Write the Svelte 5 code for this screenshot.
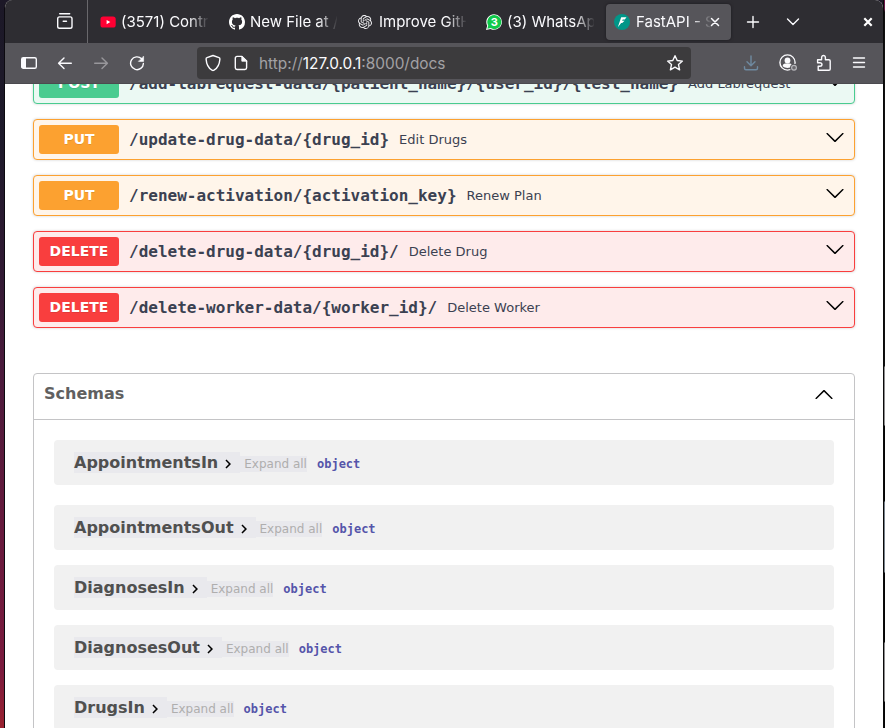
<script>
  const tabs = [
    { icon: 'youtube', label: '(3571) Contributors', width: 129 },
    { icon: 'github', label: 'New File at / · repo', width: 129 },
    { icon: 'openai', label: 'Improve GitHub', width: 128 },
    { icon: 'whatsapp', label: '(3) WhatsApp', width: 129 },
  ];
  const operations = [
    { method: 'post', path: '/add-labrequest-data/{patient_name}/{user_id}/{test_name}', summary: 'Add Labrequest' },
    { method: 'put', path: '/update-drug-data/{drug_id}', summary: 'Edit Drugs' },
    { method: 'put', path: '/renew-activation/{activation_key}', summary: 'Renew Plan' },
    { method: 'delete', path: '/delete-drug-data/{drug_id}/', summary: 'Delete Drug' },
    { method: 'delete', path: '/delete-worker-data/{worker_id}/', summary: 'Delete Worker' },
  ];
  const models = ['AppointmentsIn', 'AppointmentsOut', 'DiagnosesIn', 'DiagnosesOut', 'DrugsIn'];
</script>

<div class="desktop">
  <div class="window">
    <div class="tabbar">
      <div class="archive">
        <svg width="18" height="18" viewBox="0 0 18 18" fill="none" stroke="#fbfbfe" stroke-width="1.4" stroke-linecap="round" stroke-linejoin="round">
          <path d="M3.700 1.700h10" />
          <rect x="1.700" y="4.900" width="14.300" height="11.400" rx="1.800" />
          <path d="M7.200 9.300h3.300" />
        </svg>
      </div>
      <div class="tabs">
        {#each tabs as tab}
          <div class="tab" style="width: {tab.width}px">
            {#if tab.icon === 'youtube'}
              <svg width="16" height="16" viewBox="0 0 16 16">
                <rect x="0.500" y="2.400" width="15.200" height="11.200" rx="2.700" fill="#ff0033" />
                <path d="M6.600 5.900v4.400l3.700-2.200z" fill="#fff" />
              </svg>
            {:else if tab.icon === 'github'}
              <svg width="16" height="16" viewBox="0 0 16 16" fill="#fff">
                <path d="M8 0C3.58 0 0 3.58 0 8c0 3.54 2.29 6.53 5.47 7.59.4.07.55-.17.55-.38 0-.19-.01-.82-.01-1.49-2.01.37-2.53-.49-2.69-.94-.09-.23-.48-.94-.82-1.13-.28-.15-.68-.52-.01-.53.63-.01 1.08.58 1.23.82.72 1.21 1.87.87 2.33.66.07-.52.28-.87.51-1.07-1.78-.2-3.64-.89-3.64-3.95 0-.87.31-1.59.82-2.15-.08-.2-.36-1.02.08-2.12 0 0 .67-.21 2.2.82.64-.18 1.32-.27 2-.27s1.36.09 2 .27c1.53-1.04 2.2-.82 2.2-.82.44 1.1.16 1.920.08 2.120.51.56.82 1.270.82 2.150 0 3.070-1.870 3.750-3.650 3.950.29.25.54.73.54 1.480 0 1.070-.01 1.930-.01 2.200 0 .21.15.46.55.38A8.010 8.010 0 0 0 16 8c0-4.420-3.580-8-8-8z" />
              </svg>
            {:else if tab.icon === 'openai'}
              <svg class="knot" width="14" height="14" viewBox="0 0 24 24" fill="#f2f2f4">
                <path d="M22.2819 9.8211a5.9847 5.9847 0 0 0-.5157-4.9108 6.0462 6.0462 0 0 0-6.5098-2.9A6.0651 6.0651 0 0 0 4.9807 4.1818a5.9847 5.9847 0 0 0-3.9977 2.9 6.0462 6.0462 0 0 0 .7427 7.0966 5.98 5.98 0 0 0 .511 4.9107 6.051 6.051 0 0 0 6.5146 2.9001A5.9847 5.9847 0 0 0 13.2599 24a6.0557 6.0557 0 0 0 5.7718-4.2058 5.9894 5.9894 0 0 0 3.9977-2.9001 6.0557 6.0557 0 0 0-.7475-7.0729zm-9.022 12.6081a4.4755 4.4755 0 0 1-2.8764-1.0408l.1419-.0804 4.7783-2.7582a.7948.7948 0 0 0 .3927-.6813v-6.7369l2.02 1.1686a.071.071 0 0 1 .038.052v5.5826a4.504 4.504 0 0 1-4.4945 4.4944zm-9.6607-4.1254a4.4708 4.4708 0 0 1-.5346-3.0137l.142.0852 4.783 2.7582a.7712.7712 0 0 0 .7806 0l5.8428-3.3685v2.3324a.0804.0804 0 0 1-.0332.0615L9.74 19.9502a4.4992 4.4992 0 0 1-6.1408-1.6464zM2.3408 7.8956a4.485 4.485 0 0 1 2.3655-1.9728V11.6a.7664.7664 0 0 0 .3879.6765l5.8144 3.3543-2.0201 1.1685a.0757.0757 0 0 1-.071 0l-4.8303-2.7865A4.504 4.504 0 0 1 2.3408 7.872zm16.5963 3.8558L13.1038 8.364 15.1192 7.2a.0757.0757 0 0 1 .071 0l4.8303 2.7913a4.4944 4.4944 0 0 1-.6765 8.1042v-5.6772a.79.79 0 0 0-.407-.667zm2.0107-3.0231l-.142-.0852-4.7735-2.7818a.7759.7759 0 0 0-.7854 0L9.409 9.2297V6.8974a.0662.0662 0 0 1 .0284-.0615l4.8303-2.7866a4.4992 4.4992 0 0 1 6.6802 4.66zM8.3065 12.863l-2.02-1.1638a.0804.0804 0 0 1-.038-.0567V6.0742a4.4992 4.4992 0 0 1 7.3757-3.4537l-.142.0805L8.704 5.459a.7948.7948 0 0 0-.3927.6813zm1.0976-2.3654l2.602-1.4998 2.6069 1.4998v2.9994l-2.5974 1.4997-2.6067-1.4997Z" />
              </svg>
            {:else}
              <svg width="16" height="16" viewBox="0 0 16 16">
                <path d="M8.200.2a7.800 7.800 0 1 1-3.700 14.700L0 16l1.200-4.300A7.800 7.800 0 0 1 8.200.2z" fill="#fff" />
                <path d="M8.200 1.100a7 7 0 1 1-3.500 13L1.400 14.800l.8-3.200a7 7 0 0 1 6-10.500z" fill="#10c94a" />
                <text x="8.300" y="12" text-anchor="middle" class="count">3</text>
              </svg>
            {/if}
            <span class="label">{tab.label}</span>
          </div>
        {/each}
        <div class="tab active">
          <svg width="16" height="16" viewBox="0 0 16 16">
            <circle cx="8" cy="8" r="8" fill="#009688" />
            <path d="M7.200 3.200h5.300L10.800 5.500H8.700l-.6 1.300h2.500L8.200 9H7.200L3.800 13.200z" fill="#fff" />
          </svg>
          <span class="label">FastAPI - Swagger</span>
          <svg class="close" width="10" height="10" viewBox="0 0 10 10" stroke="#fbfbfe" stroke-width="1.500" stroke-linecap="round"><path d="M1.500 1.500l7 7M8.500 1.500l-7 7" /></svg>
        </div>
      </div>
      <svg class="plus" width="14" height="14" viewBox="0 0 14 14" stroke="#fbfbfe" stroke-width="1.400" stroke-linecap="round"><path d="M7 1.500v11M1.500 7h11" /></svg>
      <svg class="all" width="14" height="10" viewBox="0 0 14 10" fill="none" stroke="#fbfbfe" stroke-width="1.400" stroke-linecap="round" stroke-linejoin="round"><path d="M1.500 2L7 7.500 12.500 2" /></svg>
      <svg class="quit" width="10" height="10" viewBox="0 0 10 10" stroke="#fff" stroke-width="2.200"><path d="M1.300 1.300l7.400 7.400M8.700 1.300L1.300 8.700" /></svg>
    </div>

    <div class="toolbar">
      <div class="nav">
        <svg width="16" height="16" viewBox="0 0 16 16"><rect x="0.700" y="2.700" width="14.600" height="10.600" rx="1.600" fill="none" stroke="#fbfbfe" stroke-width="1.400" /><path d="M1 3h4v10H1z" fill="#fbfbfe" /></svg>
        <svg width="16" height="16" viewBox="0 0 16 16" class="line"><path d="M14.300 8.200H1.800M7 2.900L1.600 8.200 7 13.500" /></svg>
        <svg width="16" height="16" viewBox="0 0 16 16" class="line dim"><path d="M1.700 8.200h12.500M9 2.900l5.400 5.300L9 13.500" /></svg>
        <svg width="16" height="16" viewBox="0 0 16 16" class="line"><path d="M14.400 8.400A6.400 6.400 0 1 1 12.600 3.800" /><path d="M14.600 1.500v4.900H9.700z" fill="#fbfbfe" stroke-width="0.600" /></svg>
      </div>
      <div class="urlbar">
        <svg width="16" height="18" viewBox="0 0 16 18" class="line"><path d="M8 1.500l6 2.200c.8.300 1 .7.900 1.400-.4 5.500-2.300 9-5.900 11.100-.7.400-1.300.4-2 0C3.400 14.100 1.500 10.600 1.100 5.100c-.1-.7.100-1.100.9-1.400z" /></svg>
        <svg class="page-icon line" width="14" height="16" viewBox="0 0 14 16"><path d="M3 1.400h4.900l4.700 4.700v6.700a1.700 1.700 0 0 1-1.700 1.700H3a1.700 1.700 0 0 1-1.700-1.700V3.100A1.700 1.700 0 0 1 3 1.400z" /><path d="M7.800 1.500v4.700h4.700z" fill="#fbfbfe" stroke-width="0.800" /></svg>
        <span class="url">http://<b>127.0.0.1</b>:8000/docs</span>
        <svg width="18" height="18" viewBox="0 0 18 18" class="line"><path d="M9 1.700l2.200 4.800 5.200.6-3.900 3.500 1.100 5.200L9 13.200l-4.600 2.600 1.100-5.200L1.600 7.100l5.200-.6z" /></svg>
      </div>
      <div class="tools">
        <svg width="16" height="16" viewBox="0 0 16 16" class="line download"><path d="M8 1v9.500M4 6.800l4 4 4-4M1.500 11.800v1.400c0 .9.600 1.500 1.500 1.500h10c.9 0 1.500-.6 1.500-1.500v-1.400" /></svg>
        <svg width="19" height="18" viewBox="0 0 19 18">
          <circle cx="8.500" cy="8.500" r="7.600" fill="none" stroke="#fbfbfe" stroke-width="1.400" />
          <circle cx="8.500" cy="6.500" r="2.900" fill="#fbfbfe" />
          <path d="M3.700 12.300c0-2 1.100-2.800 2.600-2.800h4.400c1.500 0 2.600.8 2.600 2.800-2.600 2.200-7 2.200-9.600 0z" fill="#fbfbfe" />
          <circle cx="15" cy="13.700" r="4" fill="#56555a" />
          <circle cx="15" cy="13.700" r="2.400" fill="#6a696e" stroke="#b4b4b8" stroke-width="1.200" />
        </svg>
        <svg width="16" height="18" viewBox="0 0 16 18" class="line"><path d="M2.200 16.200V12.300h1.600c2.900 0 2.900-3.600 0-3.600H1.600V5.700h4V3.500c0-2.700 3.800-2.700 3.800 0v2.200h3.500c.8 0 1.300.5 1.300 1.300v7.900c0 .8-.5 1.300-1.300 1.300z" /></svg>
        <svg width="14" height="14" viewBox="0 0 14 14" class="line"><path d="M1.500 2h11M1.500 6.500h11M1.500 11h11" /></svg>
      </div>
    </div>

    <div class="page">
      {#each operations as op}
        <div class="operation {op.method}">
          <span class="method">{op.method.toUpperCase()}</span>
          <span class="path">{op.path}</span>
          <span class="summary">{op.summary}</span>
          <svg width="20" height="20" viewBox="0 0 20 20"><path d="M17.418 6.109c.272-.268.709-.268.979 0s.271.701 0 .969l-7.908 7.830c-.27.268-.707.268-.979 0l-7.908-7.830c-.27-.268-.27-.701 0-.969.271-.268.709-.268.979 0L10 13.250l7.418-7.141z" /></svg>
        </div>
      {/each}

      <section class="schemas">
        <h4>
          <span>Schemas</span>
          <svg width="20" height="20" viewBox="0 0 20 20"><path d="M17.418 14.908c.272.270.709.270.979 0s.271-.701 0-.969l-7.908-7.830c-.27-.268-.707-.268-.979 0l-7.908 7.830c-.27.268-.27.701 0 .969.271.270.709.270.979 0L10 7.767l7.418 7.141z" /></svg>
        </h4>
        {#each models as model}
          <div class="model">
            <span class="name"><span>{model}</span><svg width="18" height="18" viewBox="0 0 24 24"><path d="M10 6L8.590 7.410 13.170 12l-4.580 4.590L10 18l6-6z" /></svg></span>
            <span class="expand">Expand all</span>
            <span class="type">object</span>
          </div>
        {/each}
      </section>
    </div>
  </div>
  <div class="edge"></div>
</div>

<style>
  :global(body) { margin: 0; overflow: hidden; }
  .desktop {
    display: flex;
    width: 885px;
    height: 728px;
    overflow: hidden;
    background: linear-gradient(#1c1827 0%, #1e1a2b 20%, #321a34 38%, #4a1b3c 50%, #661a3d 72%, #7b1b3e 92%, #9a2230 100%);
  }
  .window {
    display: flex;
    flex-direction: column;
    width: 878px;
    margin-left: 4px;
    border-left: 1px solid #0c0a10;
    border-top-left-radius: 8px;
    border-top-right-radius: 8px;
    overflow: hidden;
    background: #fff;
  }
  .edge {
    flex: 1;
    background: linear-gradient(#6a1748 0 9px, #101010 12px 366px, #8b8a8b 367px 425px, #050505 426px 501px, #77808a 502px 572px, #050505 573px 642px, #8b8a8b 643px 701px, #050505 702px);
    border-left: 1px solid #0a0a0a;
  }
  svg { display: block; flex: none; }
  .line { fill: none; stroke: #fbfbfe; stroke-width: 1.4; stroke-linecap: round; stroke-linejoin: round; }
  .line.dim { stroke: #98979b; }
  .line.download { stroke: #6f8aa0; }

  .tabbar {
    display: flex;
    align-items: center;
    height: 43px;
    flex: none;
    background: #2e2d32;
    color: #fbfbfe;
    font: 15px Inter, sans-serif;
  }
  .archive {
    display: flex;
    align-items: center;
    width: 31px;
    height: 43px;
    padding-left: 51px;
    border-right: 1px solid #69686c;
  }
  .archive svg { margin-top: -2px; }
  .tabs { display: flex; align-items: center; padding-left: 12px; }
  .tab { display: flex; align-items: center; height: 36px; box-sizing: border-box; }
  .label {
    width: 87px;
    margin-left: 5px;
    line-height: 24px;
    white-space: nowrap;
    overflow: hidden;
    mask-image: linear-gradient(to right, #000 68px, transparent 88px);
  }
  .knot { margin-right: 2px; }
  .count { font: bold 11px Inter, sans-serif; fill: #fff; }
  .active {
    width: 125px;
    margin-left: -9px;
    padding-left: 8px;
    border-radius: 4px;
    background: #56555a;
    box-shadow: 0 0 3px #1b1a1e;
  }
  .active .label { width: 75px; margin-left: 6px; mask-image: linear-gradient(to right, #000 56px, transparent 76px); }
  .active .close { margin-left: -1px; }
  .plus { margin-left: 15px; }
  .all { margin-left: 26px; }
  .quit { margin-left: 63px; }

  .toolbar {
    display: flex;
    align-items: center;
    height: 40px;
    flex: none;
    background: #56555a;
    border-bottom: 1px solid #4b4a4f;
  }
  .nav { display: flex; gap: 20px; padding-left: 16px; width: 176px; }
  .urlbar {
    display: flex;
    align-items: center;
    width: 494px;
    height: 32px;
    box-sizing: border-box;
    padding: 0 7px 0 8px;
    border-radius: 4px;
    background: #3c3b3d;
  }
  .page-icon { margin-left: 13px; }
  .url { flex: 1; margin-left: 11px; color: #a2a1a4; font: 15.4px Inter, sans-serif; }
  .url b { font-weight: 400; color: #fbfbfe; }
  .tools { display: flex; align-items: center; margin-left: 52px; }
  .tools svg:nth-child(2) { margin-left: 20px; }
  .tools svg:nth-child(3) { margin-left: 18px; }
  .tools svg:nth-child(4) { margin-left: 20px; }

  .page {
    flex: 1;
    min-height: 0;
    overflow: hidden;
    padding: 0 28px;
    font-family: "DejaVu Sans", sans-serif;
    color: #3b4151;
  }
  .operation {
    display: flex;
    align-items: center;
    height: 41px;
    box-sizing: border-box;
    margin-bottom: 15px;
    padding: 0 9px 0 5px;
    border: 1px solid;
    border-radius: 4px;
    box-shadow: 0 0 3px rgba(0, 0, 0, 0.19);
  }
  .operation:first-child { margin-top: -21px; }
  .method {
    width: 80px;
    height: 29px;
    line-height: 29px;
    border-radius: 3px;
    color: #fff;
    font-size: 14px;
    font-weight: 700;
    text-align: center;
    text-shadow: 0 1px 0 rgba(0, 0, 0, 0.1);
  }
  .path { margin-left: 10px; font: bold 16px "DejaVu Sans Mono", monospace; white-space: nowrap; }
  .summary { flex: 1; margin-left: 10px; font-size: 13px; }
  .operation svg { margin-top: -6px; }
  .post { border-color: #49cc90; background: #ebf9f3; }
  .post .method { background: #49cc90; }
  .put { border-color: #fca130; background: #fff5ea; }
  .put .method { background: #fca130; }
  .delete { border-color: #f93e3e; background: #feebeb; }
  .delete .method { background: #f93e3e; }

  .schemas { margin-top: 45px; border: 1px solid #c4c4c6; border-radius: 4px; height: 500px; }
  h4 {
    display: flex;
    align-items: center;
    justify-content: space-between;
    height: 45px;
    margin: 0 0 20px;
    padding: 0 20px 0 10px;
    border-bottom: 1px solid #c4c4c6;
    font-size: 16px;
    color: #606060;
  }
  h4 span { margin-top: -6px; }
  h4 svg { margin-top: -6px; }
  .model {
    display: flex;
    align-items: center;
    height: 45px;
    box-sizing: border-box;
    margin: 0 20px 15px;
    padding-left: 20px;
    border-radius: 4px;
    background: #f1f1f1;
    font-size: 12px;
  }
  .model:nth-child(2) { margin-bottom: 20px; }
  .name {
    display: flex;
    align-items: center;
    height: 21px;
    padding-right: 3px;
    background: #e9e9ed;
    color: #505050;
    font-size: 16px;
    font-weight: 700;
  }
  .name span { line-height: 21px; }
  .name svg { margin: 3px 0 0 1px; fill: #000; }
  .expand { height: 16px; line-height: 17px; margin-top: 2px; padding-left: 4px; background: #e9e9ed; color: #afaeae; }
  .type { margin: 2px 0 0 10px; color: #5555aa; font: bold 12px "DejaVu Sans Mono", monospace; }
</style>
